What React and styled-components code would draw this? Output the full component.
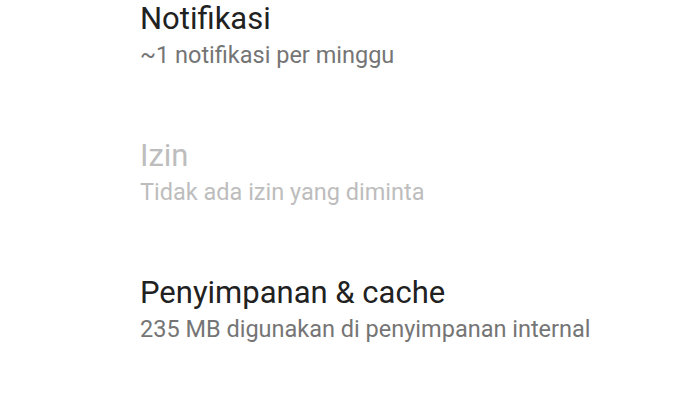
import styled, { createGlobalStyle } from "styled-components";

const GlobalStyle = createGlobalStyle`
  body {
    margin: 0;
    background-color: #ffffff;
    font-family: Roboto, "Noto Sans", sans-serif;
  }
`;

const List = styled.div`
  display: flex;
  flex-direction: column;
  gap: 69px;
  padding: 1px 0 0 140px;
  width: 700px;
  height: 400px;
  box-sizing: border-box;
  overflow: hidden;
`;

const Item = styled.div`
  display: flex;
  flex-direction: column;
  gap: 4px;
`;

const Title = styled.div`
  font-size: 31px;
  line-height: 36px;
  color: ${(props) => (props.disabled ? "#bdbdbd" : "#212121")};
`;

const Summary = styled.div`
  font-size: 23.5px;
  line-height: 28px;
  color: ${(props) => (props.disabled ? "#bdbdbd" : "#757575")};
`;

const items = [
  { title: "Notifikasi", summary: "~1 notifikasi per minggu" },
  { title: "Izin", summary: "Tidak ada izin yang diminta", disabled: true },
  {
    title: "Penyimpanan & cache",
    summary: "235 MB digunakan di penyimpanan internal",
  },
];

export default function App() {
  return (
    <>
      <GlobalStyle />
      <List>
        {items.map((item) => (
          <Item key={item.title}>
            <Title disabled={item.disabled}>{item.title}</Title>
            <Summary disabled={item.disabled}>{item.summary}</Summary>
          </Item>
        ))}
      </List>
    </>
  );
}
